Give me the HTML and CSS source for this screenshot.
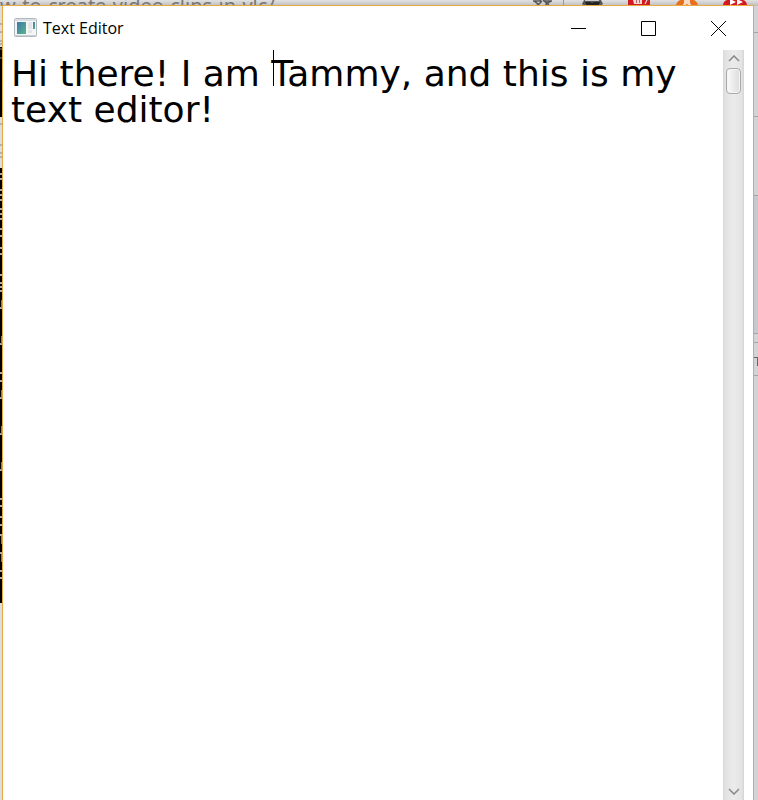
FILE: index.html
```
<!DOCTYPE html>
<html lang="en">
<head>
<meta charset="utf-8">
<title>Text Editor</title>
<link rel="stylesheet" href="styles.css">
</head>
<body>
<div class="browser-strip">
  <span class="address">w-to-create-video-clips-in-vlc/</span>
  <svg class="extensions" width="225" height="6" viewBox="0 0 225 6" aria-hidden="true">
    <path d="M0 1h7l2-3 2 3h8M1 1l4 3-2 3M18 1l-5 3 1 3M9 1l-4 4M11 1l5 4" fill="none" stroke="#555" stroke-width="1.500"/>
    <path d="M30.500 0v6" stroke="#999"/>
    <path d="M49 4l2-4h17l2 4-3 2H51z" fill="#555"/><path d="M52 0h14v1H52z" fill="#ccc"/><path d="M52 2h5l2 1 3-1h5l-2 4H54z" fill="#222"/>
    <path d="M95 0h22v6h-22z" fill="#cf1c22"/><path d="M100 0h9v4h-8z" fill="#f3d6d3"/><path d="M103.500 0v3M106.500 0v3" stroke="#b66"/><path d="M114 0l-2 4" stroke="#fff"/>
    <path d="M143 6q0-4 4-6h14q4 2 4 6z" fill="#e8701c"/><path d="M149 6l2-3v-3h6v3l2 3h-3q-2-4-4 0z" fill="#f5dcc8"/>
    <path d="M190 6q0-5 4-6h16q4 1 4 6z" fill="#d61820"/><path d="M197 0h2l4 2-6 3zM204 0h2l4 2-6 3z" fill="#fff"/>
  </svg>
</div>
<div class="left-strip" aria-hidden="true">
  <svg width="2" height="800" viewBox="0 0 2 800">
    <path d="M0 0h2v800H0z" fill="#dcdde0"/>
    <path d="M0 47h2v70H0zM0 168h2v435H0z" fill="#000"/>
    <path d="M0 24h2M0 32h2M0 41h2M0 44h2M0 49h2M0 58h2M0 124h2M0 145h2M0 153h2M0 157h2" stroke="#888"/>
    <path d="M0 174h2M0 179h2M0 190h2M0 195h2M0 200h2M0 209h2M0 214h2M0 219h2M0 229h2M0 236h2M0 248h2M0 254h2M0 275h2M0 283h2M0 287h2M0 291h2M0 308h2M0 344h2M0 373h2M0 381h2M0 398h2M0 434h2M0 470h2M0 499h2M0 506h2M0 517h2M0 525h2M0 535h2M0 553h2M0 571h2M0 578h2" stroke="#aaa" stroke-width="2"/>
    <path d="M1.500 300v8M1.500 336v8M1.500 390v8M1.500 426v8M1.500 462v8M1.500 536v8M1.500 554v8" stroke="#6680b0"/>
  </svg>
</div>
<div class="right-strip" aria-hidden="true">
  <svg width="4" height="800" viewBox="0 0 4 800">
    <path d="M0 0h4v800H0z" fill="#d3d2d4"/>
    <path d="M0 196h4v137H0z" fill="#c6c9ce"/>
    <path d="M0 32.500h4M0 116.500h4M0 195.500h4M0 333.500h4M0 342.500h4M0 375.500h4" stroke="#a5a5a8"/>
    <path d="M0 357.500h4M3.500 358v8" stroke="#666"/>
  </svg>
</div>
<main class="window">
  <header class="titlebar">
    <svg class="app-icon" width="23" height="19" viewBox="0 0 23 19" aria-hidden="true">
      <defs><linearGradient id="pane" x2="1" y2="1"><stop stop-color="#3f78ad"/><stop offset="1" stop-color="#58b489"/></linearGradient></defs>
      <rect x=".5" y=".5" width="22" height="18" rx="1" fill="#f4f5f6" stroke="#b1b8be"/>
      <path d="M1 1h21v2H1z" fill="#d9dfe4"/>
      <path d="M3 4h9v12H3z" fill="url(#pane)"/>
      <path d="M14 4h4v7h-4zM14 12h4v3h-4z" fill="#e4e5e6"/>
      <path d="M19 4h2v7h-2z" fill="url(#pane)"/>
      <path d="M1 17h21v1H1z" fill="#cbd0d4"/>
    </svg>
    <h1 class="title">Text Editor</h1>
    <div class="controls">
      <button type="button" aria-label="Minimize"><svg width="15" height="15" viewBox="0 0 15 15"><path d="M0 7.500h15"/></svg></button>
      <button type="button" aria-label="Maximize"><svg width="15" height="15" viewBox="0 0 15 15"><path d="M.5.500h14v14H.5z"/></svg></button>
      <button type="button" aria-label="Close"><svg width="15" height="15" viewBox="0 0 15 15"><path d="M0 0l15 15M15 0L0 15"/></svg></button>
    </div>
  </header>
  <div class="editor">
    <textarea class="document" aria-label="Document" spellcheck="false">Hi there! I am Tammy, and this is my text editor!</textarea>
    <span class="caret"></span>
    <div class="scrollbar">
      <button type="button" aria-label="Scroll up"><svg width="12" height="7" viewBox="0 0 12 7"><path d="M1 6l5-5 5 5"/></svg></button>
      <div class="track"><div class="thumb"></div></div>
      <button type="button" aria-label="Scroll down"><svg width="12" height="7" viewBox="0 0 12 7"><path d="M1 1l5 5 5-5"/></svg></button>
    </div>
  </div>
</main>
</body>
</html>
```
FILE: styles.css
```
* {
  box-sizing: border-box;
}

body {
  display: flex;
  height: 100vh;
  margin: 0;
  padding: 5px 4px 0 2px;
  overflow: hidden;
  background: #d3d2d4;
  font-family: "Open Sans", "Noto Sans", sans-serif;
}

.browser-strip {
  position: absolute;
  inset: 0 0 auto;
  height: 24px;
  background: linear-gradient(#e2e2e2, #bcbcbc 6px);
}

.address {
  position: absolute;
  top: -6px;
  left: 0;
  color: #777;
  font-family: "Noto Sans", sans-serif;
  font-size: 20px;
  line-height: 24px;
}

.extensions {
  position: absolute;
  top: 0;
  right: 0;
}

.left-strip,
.right-strip {
  position: absolute;
  top: 6px;
  bottom: 0;
  overflow: hidden;
}

.left-strip {
  left: 0;
}

.right-strip {
  right: 0;
}

.left-strip svg,
.right-strip svg {
  margin-top: -6px;
}

.window {
  position: relative;
  display: flex;
  flex: 1;
  flex-direction: column;
  border: 1px solid #e9a842;
  border-bottom: 0;
  background: #fff;
}

.titlebar {
  display: flex;
  align-items: center;
  height: 44px;
  padding-left: 11px;
}

.app-icon {
  margin-bottom: 2px;
}

.title {
  margin: 0 0 0 6px;
  font-size: 16px;
  font-weight: 400;
  line-height: 24px;
}

.controls {
  display: flex;
  align-self: stretch;
  margin-left: auto;
}

button {
  display: grid;
  place-items: center;
  padding: 0;
  border: 0;
  background: transparent;
}

button svg {
  fill: none;
  stroke: #000;
}

.controls button {
  width: 70px;
}

.editor {
  position: relative;
  display: flex;
  flex: 1;
  min-height: 0;
  padding-right: 9px;
}

.document {
  flex: 1;
  min-width: 0;
  padding: 6px 8px 0;
  border: 0;
  outline: 0;
  background: transparent;
  color: #000;
  font-family: Verdana, "DejaVu Sans", sans-serif;
  font-size: 36px;
  line-height: 36px;
  resize: none;
  overflow: hidden;
}

.caret {
  position: absolute;
  top: 0;
  left: 270px;
  width: 1px;
  height: 36px;
  background: #000;
}

.scrollbar {
  display: flex;
  flex-direction: column;
  width: 21px;
  background: linear-gradient(90deg, #d8d8d8, #e2e2e2 10%, #ebebeb 50%, #e4e4e4 88%, #d4d4d4);
}

.scrollbar button {
  height: 17px;
}

.scrollbar svg {
  stroke: #8c8c8c;
  stroke-width: 1.6;
}

.track {
  flex: 1;
  padding: 1px 3px;
}

.thumb {
  height: 26px;
  border: 1px solid #aaa;
  border-radius: 4px;
  background: linear-gradient(90deg, #fafafa, #dcdcdc);
  box-shadow: inset 0 0 0 1px #f5f5f5;
}
```
